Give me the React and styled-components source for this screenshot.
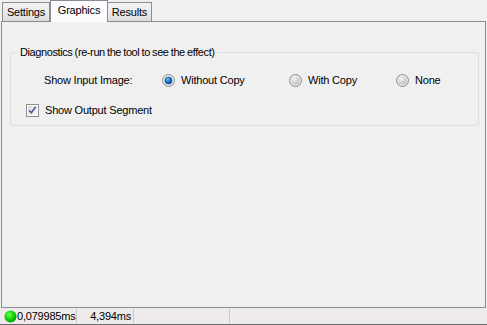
import React from "react";
import styled, { createGlobalStyle } from "styled-components";

const Global = createGlobalStyle`
  html, body { margin: 0; padding: 0; background: #f0f0f0; }
  body { font-family: "Liberation Sans", Arial, sans-serif; font-size: 11px; color: #000; letter-spacing: -0.2px; }
  #root { width: 487px; height: 325px; }
`;

const Window = styled.div`
  width: 487px;
  height: 325px;
  display: flex;
  flex-direction: column;
  background: #f0f0f0;
  overflow: hidden;
`;

const TabRow = styled.div`
  height: 21px;
  display: flex;
  align-items: flex-end;
  padding-left: 2px;
  position: relative;
  z-index: 1;
`;

const Tab = styled.div`
  box-sizing: border-box;
  width: ${(p) => p.$w}px;
  height: ${(p) => (p.$active ? 22 : 19)}px;
  margin-bottom: ${(p) => (p.$active ? -1 : 0)}px;
  border: 1px solid #898c95;
  border-bottom: none;
  border-left: ${(p) => (p.$noLeft ? "none" : "1px solid #898c95")};
  background: ${(p) =>
    p.$active ? "#fcfcfe" : "linear-gradient(#f2f2f2, #ebebeb 50%, #dcdcdc)"};
  display: flex;
  justify-content: center;
  align-items: ${(p) => (p.$active ? "flex-start" : "center")};
  padding-top: ${(p) => (p.$active ? 3 : 0)}px;
  line-height: 13px;
  white-space: nowrap;
`;

const Panel = styled.div`
  box-sizing: border-box;
  height: 287px;
  margin: 0 1px;
  border: 1px solid #898c95;
  background: #f0f0f0;
  padding-top: 30px;
  padding-left: 8px;
`;

const GroupBox = styled.div`
  position: relative;
  box-sizing: border-box;
  width: 469px;
  height: 74px;
  border: 1px solid #d5dfe5;
  border-radius: 3px;
  padding: 21px 0 0 0;
  display: flex;
  flex-direction: column;
  gap: 17px;
`;

const GroupTitle = styled.span`
  position: absolute;
  left: 7px;
  top: -7px;
  padding: 0 2px;
  background: #f0f0f0;
  line-height: 13px;
  white-space: nowrap;
  letter-spacing: -0.4px;
  word-spacing: -0.5px;
`;

const RadioRow = styled.div`
  display: grid;
  grid-template-columns: 118px 127px 107px 1fr;
  align-items: center;
  padding-left: 33px;
  height: 13px;
  line-height: 13px;
`;

const Option = styled.label`
  display: flex;
  align-items: center;
  gap: ${(p) => p.$gap || 6}px;
  white-space: nowrap;
  line-height: 13px;
`;

const CheckRow = styled.div`
  display: flex;
  align-items: center;
  padding-left: 15px;
  height: 13px;
`;

const StatusBar = styled.div`
  box-sizing: border-box;
  height: 17px;
  background: #efebea;
  border-bottom: 1px solid #6b6b6b;
  display: flex;
  align-items: stretch;
`;

const StatusCell = styled.div`
  box-sizing: border-box;
  width: ${(p) => p.$w}px;
  display: flex;
  align-items: center;
  justify-content: ${(p) => p.$justify || "flex-start"};
  padding: ${(p) => p.$pad || "0"};
  border-right: ${(p) => (p.$sep ? "1px solid #cbc7c5" : "none")};
  margin: 1px 0 1px;
  line-height: 13px;
  white-space: nowrap;
`;

const Radio = ({ checked }) => (
  <svg width="13" height="13" viewBox="0 0 13 13">
    <defs>
      <radialGradient id="rOuter" cx="50%" cy="40%" r="60%">
        <stop offset="0" stopColor="#f8f8f8" />
        <stop offset="1" stopColor="#dcdcdc" />
      </radialGradient>
      <radialGradient id="rInner" cx="35%" cy="30%" r="75%">
        <stop offset="0" stopColor="#f4f4f4" />
        <stop offset="1" stopColor="#bdbdbd" />
      </radialGradient>
      <radialGradient id="rDot" cx="40%" cy="35%" r="70%">
        <stop offset="0" stopColor="#63c0f5" />
        <stop offset="0.5" stopColor="#1e74c8" />
        <stop offset="1" stopColor="#0c3c82" />
      </radialGradient>
    </defs>
    <circle cx="6.5" cy="6.5" r="6" fill="url(#rOuter)" stroke="#8e8f8f" strokeWidth="1" />
    {checked ? (
      <circle cx="6.5" cy="6.5" r="3.6" fill="url(#rDot)" stroke="#1b4f96" strokeWidth="0.6" />
    ) : (
      <circle cx="6.5" cy="6.5" r="4" fill="url(#rInner)" />
    )}
  </svg>
);

const Checkbox = () => (
  <svg width="13" height="13" viewBox="0 0 13 13">
    <defs>
      <linearGradient id="cInner" x1="0" y1="0" x2="1" y2="1">
        <stop offset="0" stopColor="#d6d6d6" />
        <stop offset="1" stopColor="#fafafa" />
      </linearGradient>
    </defs>
    <rect x="0.5" y="0.5" width="12" height="12" fill="#fdfdfd" stroke="#8e8f8f" />
    <rect x="2" y="2" width="9" height="9" fill="url(#cInner)" />
    <path d="M3.2 6.4 L5.3 8.8 L9.8 2.8" fill="none" stroke="#4a5fa8" strokeWidth="1.6" />
  </svg>
);

const GreenDot = () => (
  <svg width="13" height="13" viewBox="0 0 13 13">
    <defs>
      <radialGradient id="gDot" cx="40%" cy="35%" r="65%">
        <stop offset="0" stopColor="#6cff5a" />
        <stop offset="0.55" stopColor="#16d80c" />
        <stop offset="1" stopColor="#0a9a06" />
      </radialGradient>
    </defs>
    <circle cx="6.5" cy="6.5" r="6" fill="url(#gDot)" />
  </svg>
);

export default function App() {
  return (
    <>
      <Global />
      <Window>
        <TabRow>
          <Tab $w={48}>Settings</Tab>
          <Tab $w={58} $active>Graphics</Tab>
          <Tab $w={44} $noLeft>Results</Tab>
        </TabRow>
        <Panel>
          <GroupBox>
            <GroupTitle>Diagnostics (re-run the tool to see the effect)</GroupTitle>
            <RadioRow>
              <span>Show Input Image:</span>
              <Option>
                <Radio checked />
                Without Copy
              </Option>
              <Option>
                <Radio />
                With Copy
              </Option>
              <Option>
                <Radio />
                None
              </Option>
            </RadioRow>
            <CheckRow>
              <Option $gap={6}>
                <Checkbox />
                Show Output Segment
              </Option>
            </CheckRow>
          </GroupBox>
        </Panel>
        <StatusBar>
          <StatusCell $w={77} $sep $pad="0 0 0 4px">
            <GreenDot />
            0,079985ms
          </StatusCell>
          <StatusCell $w={57} $sep $justify="flex-end" $pad="0 2px 0 0">
            4,394ms
          </StatusCell>
          <StatusCell $w={96} $sep />
        </StatusBar>
      </Window>
    </>
  );
}
